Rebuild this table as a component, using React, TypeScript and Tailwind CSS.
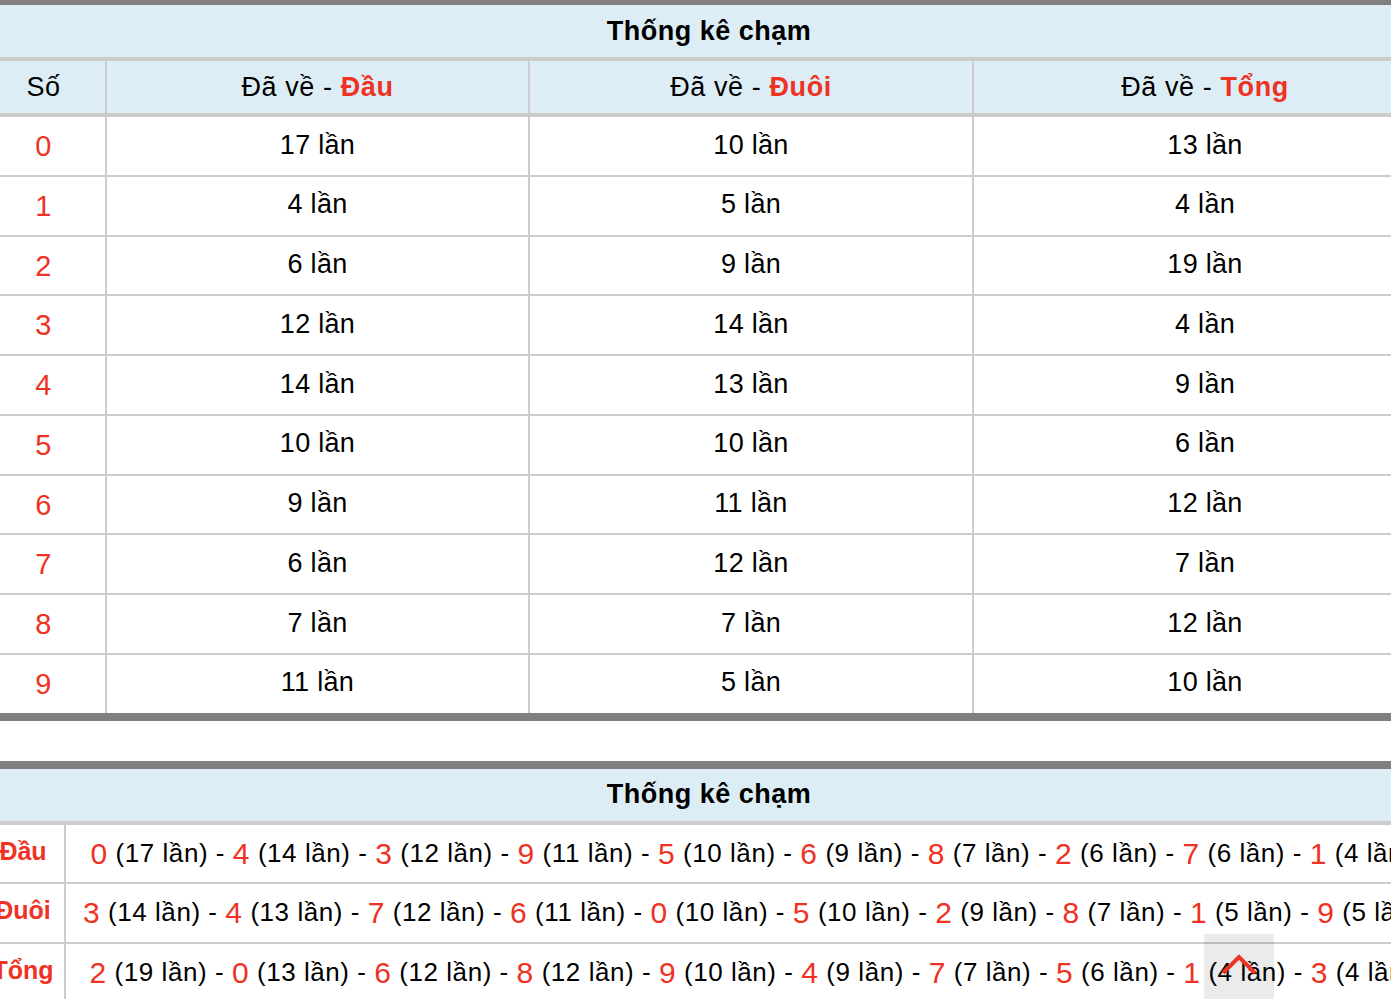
import React from "react";

const dau = [17, 4, 6, 12, 14, 10, 9, 6, 7, 11];
const duoi = [10, 5, 9, 14, 13, 10, 11, 12, 7, 5];
const tong = [13, 4, 19, 4, 9, 6, 12, 7, 12, 10];

const rows2: { label: string; items: { n: number; v: number }[] }[] = [
  {
    label: "Đầu",
    items: [
      { n: 0, v: 17 }, { n: 4, v: 14 }, { n: 3, v: 12 }, { n: 9, v: 11 }, { n: 5, v: 10 },
      { n: 6, v: 9 }, { n: 8, v: 7 }, { n: 2, v: 6 }, { n: 7, v: 6 }, { n: 1, v: 4 },
    ],
  },
  {
    label: "Đuôi",
    items: [
      { n: 3, v: 14 }, { n: 4, v: 13 }, { n: 7, v: 12 }, { n: 6, v: 11 }, { n: 0, v: 10 },
      { n: 5, v: 10 }, { n: 2, v: 9 }, { n: 8, v: 7 }, { n: 1, v: 5 }, { n: 9, v: 5 },
    ],
  },
  {
    label: "Tổng",
    items: [
      { n: 2, v: 19 }, { n: 0, v: 13 }, { n: 6, v: 12 }, { n: 8, v: 12 }, { n: 9, v: 10 },
      { n: 4, v: 9 }, { n: 7, v: 7 }, { n: 5, v: 6 }, { n: 1, v: 4 }, { n: 3, v: 4 },
    ],
  },
];

export default function App() {
  return (
    <div className="w-full overflow-hidden bg-white font-['Liberation_Sans',Arial,sans-serif] text-black">
      <div className="ml-[-18px] w-[1454px]">
        {/* Table 1 */}
        <div className="border-t-[5px] border-b-[8px] border-[#808080]">
          <div className="h-[56px] bg-[#ddedf5] flex items-center justify-center text-[27px] tracking-[0.5px] font-bold border-b-4 border-[#cccccc]">
            Thống kê chạm
          </div>
          <div className="grid grid-cols-[123px_423px_444px_464px] h-[56px] bg-[#ddedf5] border-b-4 border-[#cccccc] text-[27px] tracking-[0.6px]">
            <div className="flex items-center justify-center">Số</div>
            <div className="flex items-center justify-center border-l-2 border-[#cccccc]">
              Đã về -&nbsp;<b className="text-[#ee3224]">Đầu</b>
            </div>
            <div className="flex items-center justify-center border-l-2 border-[#cccccc]">
              Đã về -&nbsp;<b className="text-[#ee3224]">Đuôi</b>
            </div>
            <div className="flex items-center justify-center border-l-2 border-[#cccccc]">
              Đã về -&nbsp;<b className="text-[#ee3224]">Tổng</b>
            </div>
          </div>
          {dau.map((d, i) => (
            <div
              key={i}
              className={`grid grid-cols-[123px_423px_444px_464px] text-[27px] tracking-[0.3px] ${
                i < 9 ? "h-[59.75px] border-b-2 border-[#cccccc]" : "h-[57.75px]"
              }`}
            >
              <div className="flex items-center justify-center text-[29px] text-[#ee3224] pt-[2px]">{i}</div>
              <div className="flex items-center justify-center border-l-2 border-[#cccccc] pb-[2px]">{d} lần</div>
              <div className="flex items-center justify-center border-l-2 border-[#cccccc] pb-[2px]">{duoi[i]} lần</div>
              <div className="flex items-center justify-center border-l-2 border-[#cccccc] pb-[2px]">{tong[i]} lần</div>
            </div>
          ))}
        </div>

        <div className="h-[40px]" />

        {/* Table 2 */}
        <div className="border-t-[8px] border-[#808080]">
          <div className="h-[56px] bg-[#ddedf5] flex items-center justify-center text-[27px] tracking-[0.5px] font-bold border-b-4 border-[#cccccc]">
            Thống kê chạm
          </div>
          <div className="grid grid-cols-[82px_max-content] w-max">
            {rows2.map((r, ri) => (
              <React.Fragment key={ri}>
                <div className="h-[59.5px] flex items-center justify-center border-b-2 border-[#cccccc] text-[25px] font-bold text-[#ee3224] whitespace-nowrap pb-[4px]">
                  <span className="shrink-0">{r.label}</span>
                </div>
                <div className="h-[59.5px] flex items-center justify-center border-b-2 border-l-2 border-[#cccccc] px-[17px] whitespace-nowrap text-[26px] tracking-[0.55px]">
                  {r.items.map((it, k) => (
                    <React.Fragment key={k}>
                      <span className="text-[30px] text-[#ee3224]">{it.n}</span>
                      &nbsp;({it.v} lần)
                      {k < r.items.length - 1 ? "\u00a0-\u00a0" : ""}
                    </React.Fragment>
                  ))}
                </div>
              </React.Fragment>
            ))}
          </div>
        </div>
      </div>

      {/* Scroll to top */}
      <button className="fixed left-[1204px] top-[934px] w-[70px] h-[70px] bg-black/[0.08] flex items-start justify-center">
        <svg width="40" height="24" viewBox="0 0 40 24" className="mt-[20px]">
          <polyline points="4,19 20,3 36,19" fill="none" stroke="#ee3224" strokeWidth="4" />
        </svg>
      </button>
    </div>
  );
}
